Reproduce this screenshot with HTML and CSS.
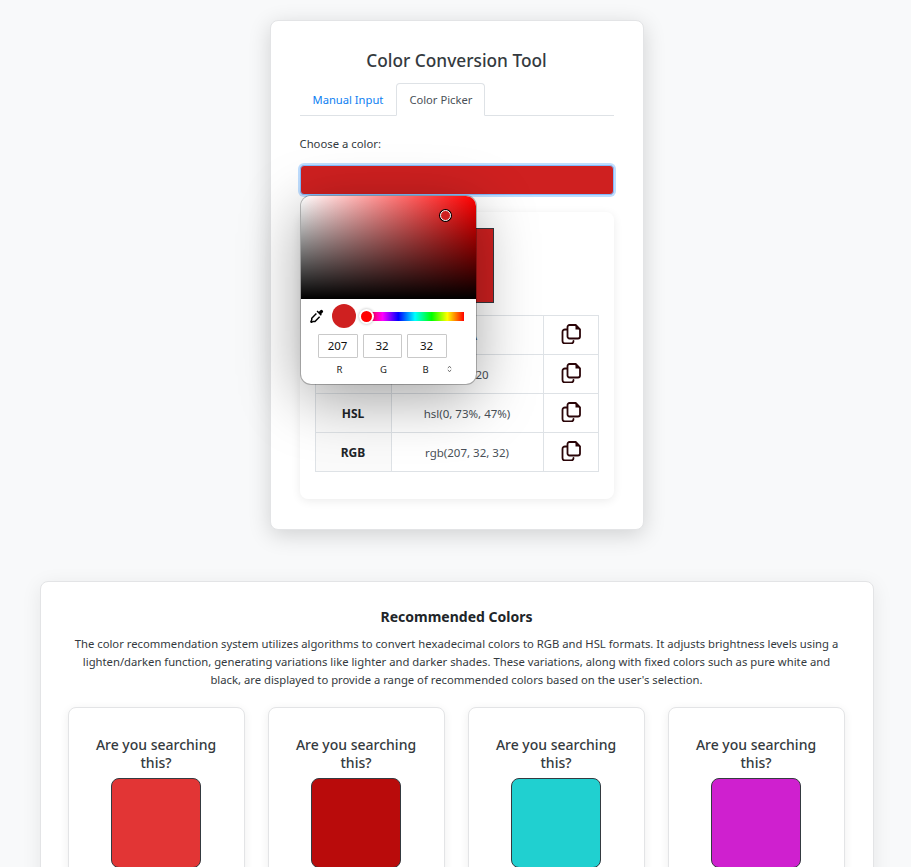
FILE: index.html
```html
<!DOCTYPE html>
<html lang="en">
<head>
<meta charset="utf-8">
<title>Color Conversion Tool</title>
<link rel="stylesheet" href="styles.css">
</head>
<body>
<main class="page">
  <section class="tool">
    <h1 class="tool-title">Color Conversion Tool</h1>
    <div class="tabs">
      <a class="tab">Manual Input</a>
      <a class="tab active">Color Picker</a>
    </div>
    <label class="choose">Choose a color:</label>
    <div class="picker-wrap">
      <div class="color-field"></div>
      <div class="popover">
        <div class="sat"><span class="sat-thumb"></span></div>
        <div class="controls">
          <svg class="dropper" viewBox="0 0 16 16" width="14" height="14"><path d="M10.2 3.2 11.9 1.500a1.600 1.600 0 0 1 2.300 0l.3.3a1.600 1.600 0 0 1 0 2.300l-1.700 1.700.7.7-1.200 1.200-4.800-4.800 1.200-1.200z" fill="#000"/><path d="M7.300 5.200 2 10.500v1.800L1 14.600l.6.6 2.300-1h1.800l5.300-5.300" fill="#fff" stroke="#000" stroke-width="1.700"/></svg>
          <span class="preview"></span>
          <div class="hue"><span class="hue-thumb"></span></div>
        </div>
        <div class="rgb-inputs">
          <span class="rgb-box">207</span>
          <span class="rgb-box">32</span>
          <span class="rgb-box">32</span>
        </div>
        <div class="rgb-labels">
          <span>R</span><span>G</span><span>B</span>
          <svg class="updown" viewBox="0 0 6 10" width="5" height="8"><path d="M1 4 3 1.500 5 4M1 6l2 2.500L5 6" fill="none" stroke="#555" stroke-width="1"/></svg>
        </div>
      </div>
    </div>
    <div class="result">
      <div class="result-swatch"></div>
      <table class="values">
        <tr><th>Name</th><td>N/A</td><td><svg class="copy" viewBox="0 0 20 20"><use href="#copy-icon"/></svg></td></tr>
        <tr><th>HEX</th><td>#cf2020</td><td><svg class="copy" viewBox="0 0 20 20"><use href="#copy-icon"/></svg></td></tr>
        <tr><th>HSL</th><td>hsl(0, 73%, 47%)</td><td><svg class="copy" viewBox="0 0 20 20"><use href="#copy-icon"/></svg></td></tr>
        <tr><th>RGB</th><td>rgb(207, 32, 32)</td><td><svg class="copy" viewBox="0 0 20 20"><use href="#copy-icon"/></svg></td></tr>
      </table>
    </div>
  </section>

  <section class="recommend">
    <h2 class="rec-title">Recommended Colors</h2>
    <p class="rec-text">The color recommendation system utilizes algorithms to convert hexadecimal colors to RGB and HSL formats. It adjusts brightness levels using a lighten/darken function, generating variations like lighter and darker shades. These variations, along with fixed colors such as pure white and black, are displayed to provide a range of recommended colors based on the user's selection.</p>
    <div class="rec-grid">
      <article class="rec-card"><h3>Are you searching this?</h3><div class="rec-swatch c1"></div></article>
      <article class="rec-card"><h3>Are you searching this?</h3><div class="rec-swatch c2"></div></article>
      <article class="rec-card"><h3>Are you searching this?</h3><div class="rec-swatch c3"></div></article>
      <article class="rec-card"><h3>Are you searching this?</h3><div class="rec-swatch c4"></div></article>
    </div>
  </section>
</main>
<svg class="defs" width="0" height="0">
  <symbol id="copy-icon" viewBox="0 0 20 20">
    <path d="M6 5.500H4A2.500 2.500 0 0 0 1.500 8v9A2.500 2.500 0 0 0 4 19.500h6A2.500 2.500 0 0 0 12.500 17" fill="none" stroke="#2a0508" stroke-width="1.800" stroke-linecap="round"/>
    <path d="M8.500 1h6.200L19 5.300V12.500a2 2 0 0 1-2 2H8.500a2 2 0 0 1-2-2V3a2 2 0 0 1 2-2z" fill="#fff" stroke="#2a0508" stroke-width="1.800" stroke-linejoin="round"/>
    <path d="M14.500 1 19 5.500h-4.500z" fill="#2a0508"/>
  </symbol>
</svg>
</body>
</html>
```
FILE: styles.css
```css
* { box-sizing: border-box; }
html, body { height: 100%; overflow: hidden; }
body {
  margin: 0;
  background: #f8f9fa;
  color: #343a40;
  font-family: "Noto Sans", "Open Sans", "Liberation Sans", sans-serif;
  font-size: 12px;
}
.defs { position: absolute; }
.page { display: flex; flex-direction: column; align-items: center; padding: 20px 0 0 2px; }

.tool {
  width: 374px;
  height: 510px;
  padding: 29px 29px 30px;
  background: #fff;
  border: 1px solid #e3e4e6;
  border-radius: 8px;
  box-shadow: 0 5px 22px rgba(0, 0, 0, .16);
}
.tool-title { margin: 0 0 11px; height: 22px; font-size: 17.300px; line-height: 22px; font-weight: 500; text-align: center; color: #343a40; }
.tabs { display: flex; height: 33px; border-bottom: 1px solid #dee2e6; }
.tab { padding: 0 12px; height: 33px; line-height: 32px; font-size: 11.200px; color: #0d80f2; border: 1px solid transparent; border-radius: 4px 4px 0 0; }
.tab.active { color: #495057; background: #fff; border-color: #dee2e6 #dee2e6 #fff; }
.choose { display: block; margin-top: 19px; height: 17px; line-height: 17px; font-size: 11.300px; color: #343a40; }

.picker-wrap { position: relative; margin-top: 13px; }
.color-field {
  height: 30px;
  background: #cf2020;
  border: 1px solid #80bdff;
  border-radius: 4px;
  box-shadow: 0 0 0 2px rgba(0, 123, 255, .25);
}
.popover {
  position: absolute;
  z-index: 2;
  left: 1px;
  top: 31px;
  width: 175px;
  height: 188px;
  background: #fff;
  border-radius: 10px;
  box-shadow: 0 0 0 1px rgba(0, 0, 0, .25), 0 14px 60px rgba(0, 0, 0, .36);
}
.sat {
  position: relative;
  height: 103px;
  border-radius: 10px 10px 0 0;
  background: linear-gradient(to top, #000, transparent), linear-gradient(to right, #fff, #f00);
}
.sat-thumb {
  position: absolute;
  left: 139px;
  top: 14px;
  width: 11px;
  height: 11px;
  border-radius: 50%;
  background: #cf2020;
  border: 1.500px solid #fff;
  box-shadow: 0 0 0 1px #000;
}
.controls { display: flex; align-items: center; height: 34px; padding: 0 12px 0 9px; }
.controls .dropper { flex: none; }
.preview { flex: none; width: 24px; height: 24px; margin-left: 8px; border-radius: 50%; background: #cf2020; }
.hue {
  position: relative;
  flex: 1;
  height: 9px;
  margin-left: 10px;
  background: linear-gradient(to right, #f00, #f0f 17%, #00f 33%, #0ff 50%, #0f0 67%, #ff0 83%, #f00);
}
.hue-thumb {
  position: absolute;
  left: -5px;
  top: -1px;
  width: 11px;
  height: 11px;
  border-radius: 50%;
  background: #f00;
  box-shadow: 0 0 0 2px #fff, 0 0 3px 2px rgba(0, 0, 0, .3);
}
.rgb-inputs { display: flex; gap: 5px; padding: 1px 0 0 17px; }
.rgb-box {
  width: 40px;
  height: 24px;
  line-height: 22px;
  text-align: center;
  font-size: 11.500px;
  color: #111;
  border: 1px solid #c9c9c9;
  border-radius: 1px;
}
.rgb-box:nth-child(2) { width: 39px; }
.rgb-labels { position: relative; display: flex; padding: 5px 0 0 17px; font-size: 9.500px; color: #222; line-height: 13px; }
.rgb-labels span { text-align: center; width: 44px; }
.rgb-labels span:nth-child(3) { width: 40px; }
.updown { position: absolute; left: 146px; top: 7px; }

.result {
  margin-top: 17px;
  height: 287px;
  padding: 16px 15px;
  background: #fff;
  border-radius: 8px;
  box-shadow: 0 2px 10px rgba(0, 0, 0, .08);
}
.result-swatch { width: 75px; height: 75px; margin: 0 auto 12px; background: #cf2020; border: 1px solid #343a40; }
.values { width: 284px; border-collapse: collapse; font-size: 11.500px; table-layout: fixed; }
.values tr { height: 39px; }
.values th, .values td { border: 1px solid #dee2e6; text-align: center; padding: 0; vertical-align: middle; }
.values th { width: 76px; background: rgba(0, 0, 0, .02); font-size: 12px; font-weight: 700; color: #212529; }
.values td:nth-child(2) { width: 152px; color: #495057; }
.copy { display: block; width: 20px; height: 20px; margin: -2px auto 0; }

.recommend {
  width: 834px;
  flex: none;
  margin-top: 51px;
  padding: 24px 27px;
  background: #fff;
  border: 1px solid #e3e4e6;
  border-radius: 8px;
  box-shadow: 0 4px 20px rgba(0, 0, 0, .08);
}
.rec-title { margin: 0 0 7px; height: 22px; font-size: 14px; line-height: 22px; font-weight: 700; text-align: center; color: #212529; }
.rec-text { margin: 0 0 18px; font-size: 11.270px; line-height: 18px; text-align: center; color: #343a40; }
.rec-grid { display: grid; grid-template-columns: repeat(4, 177px); gap: 23px; }
.rec-card {
  height: 300px;
  padding: 28px 8px 0;
  background: #fff;
  border: 1px solid #e3e4e6;
  border-radius: 8px;
  box-shadow: 0 2px 10px rgba(0, 0, 0, .07);
  text-align: center;
}
.rec-card h3 { margin: 0 auto 6px; width: 140px; font-size: 14px; line-height: 18px; font-weight: 500; color: #343a40; }
.rec-swatch { width: 90px; height: 90px; margin: 0 auto; border: 1px solid #343a40; border-radius: 8px; }
.c1 { background: #e23535; }
.c2 { background: #b90b0b; }
.c3 { background: #20d0d0; }
.c4 { background: #cf20cf; }
```
